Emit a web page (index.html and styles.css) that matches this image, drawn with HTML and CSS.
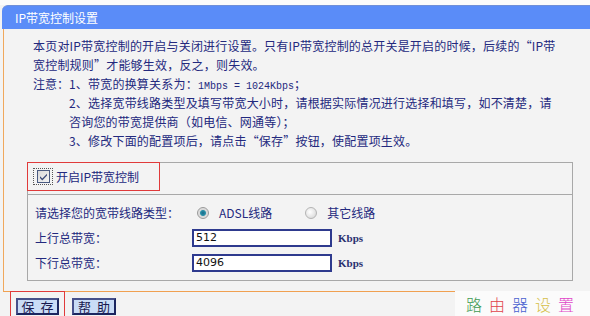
FILE: index.html
```html
<!DOCTYPE html>
<html lang="zh-CN">
<head>
<meta charset="utf-8">
<title>IP带宽控制设置</title>
<link rel="stylesheet" href="styles.css">
</head>
<body>
<div class="page">
  <div class="titlebar">IP带宽控制设置</div>
  <div class="panel">
    <div class="intro">
      <p class="line">本页对IP带宽控制的开启与关闭进行设置。只有IP带宽控制的总开关是开启的时候，后续的“IP带</p>
      <p class="line">宽控制规则”才能够生效，反之，则失效。</p>
      <div class="note">
        <span class="note-label">注意：</span>
        <div class="note-items">
          <p class="line">1、带宽的换算关系为：<span class="mono">1Mbps = 1024Kbps</span>；</p>
          <p class="line">2、选择宽带线路类型及填写带宽大小时，请根据实际情况进行选择和填写，如不清楚，请</p>
          <p class="line">咨询您的带宽提供商（如电信、网通等）；</p>
          <p class="line">3、修改下面的配置项后，请点击“保存”按钮，使配置项生效。</p>
        </div>
      </div>
    </div>
    <div class="group">
      <div class="group-head">
        <label class="hl-box">
          <span class="focus">
            <svg class="checkbox" width="13" height="13" viewBox="0 0 13 13">
              <defs>
                <linearGradient id="cbg" x1="0" y1="0" x2="1" y2="1">
                  <stop offset="0" stop-color="#d8d8d8"/>
                  <stop offset="1" stop-color="#f4f4f4"/>
                </linearGradient>
              </defs>
              <rect x="0.5" y="0.5" width="12" height="12" fill="url(#cbg)" stroke="#4a5a80"/>
              <path d="M3 6.2 L5.3 8.6 L10 3.8 L10 5.6 L5.3 10.4 L3 8 Z" fill="#3a4a78"/>
            </svg>
          </span>
          <span class="head-text">开启IP带宽控制</span>
        </label>
      </div>
      <div class="group-body">
        <div class="row">
          <span class="label">请选择您的宽带线路类型：</span>
          <div class="value radios">
            <span class="radio-item">
              <span class="radio checked"></span><span class="radio-text">ADSL线路</span>
            </span>
            <span class="radio-item">
              <span class="radio"></span><span class="radio-text">其它线路</span>
            </span>
          </div>
        </div>
        <div class="row">
          <span class="label">上行总带宽：</span>
          <div class="value">
            <span class="input">512</span><span class="unit">Kbps</span>
          </div>
        </div>
        <div class="row">
          <span class="label">下行总带宽：</span>
          <div class="value">
            <span class="input">4096</span><span class="unit">Kbps</span>
          </div>
        </div>
      </div>
    </div>
  </div>
  <div class="actions">
    <span class="hl-btn"><button class="btn" type="button">保 存</button></span>
    <button class="btn btn-plain" type="button">帮 助</button>
  </div>
  <div class="watermark">
    <span class="wm c1">路</span><span class="wm c2">由</span><span class="wm c3">器</span><span class="wm c4">设</span><span class="wm c5">置</span>
  </div>
</div>
</body>
</html>
```

FILE: styles.css
```css
* { box-sizing: border-box; }

html, body {
  margin: 0;
  padding: 0;
}

body {
  background: #f3f3f3;
  font-family: "Noto Sans CJK SC", "DejaVu Sans", sans-serif;
  font-size: 12px;
  color: #23297e;
  width: 590px;
  height: 316px;
  overflow: hidden;
}

.page {
  position: relative;
  width: 590px;
  height: 316px;
  padding-top: 5px;
  background: linear-gradient(#fbfbfb 0, #fbfbfb 5px, #f3f3f3 5px);
}

.titlebar {
  margin-left: 2px;
  height: 24px;
  line-height: 23px;
  padding-left: 13px;
  background: #5a8cf8;
  border-top: 1px solid #6f8fd8;
  border-radius: 6px 0 0 0;
  color: #ffffff;
  font-size: 12px;
}

.panel {
  margin-left: 3px;
  border-left: 1px solid #f0a85c;
  border-bottom: 1px solid #f0a050;
  padding: 7px 17px 10px 0;
  background: #f3f3f3;
}

.intro {
  padding-left: 29px;
}

.line {
  margin: 0;
  height: 19px;
  line-height: 19px;
  white-space: nowrap;
  letter-spacing: 0.2px;
}

.note {
  display: flex;
}

.note-label {
  width: 36px;
  flex: none;
  line-height: 19px;
}

.note-items {
  display: flex;
  flex-direction: column;
}

.mono {
  font-family: "Liberation Mono", monospace;
  font-size: 10px;
  letter-spacing: 0;
}

.group {
  margin: 12px 0 0 23px;
  border: 1px solid #a8a8a8;
}

.group-head {
  height: 32px;
  border-bottom: 1px solid #a8a8a8;
}

.hl-box {
  display: inline-flex;
  align-items: center;
  margin: -1px 0 0 -1px;
  width: 133px;
  height: 29px;
  border: 1px solid #e03a3a;
  padding-left: 5px;
}

.focus {
  display: inline-flex;
  align-items: center;
  justify-content: center;
  width: 20px;
  height: 17px;
  outline: 1px dotted #555;
  outline-offset: -1px;
}

.checkbox {
  display: block;
}

.head-text {
  margin-left: 3px;
  font-size: 12px;
}

.group-body {
  padding: 5px 0 5px 7px;
}

.row {
  display: grid;
  grid-template-columns: 157px 1fr;
  align-items: center;
  height: 25px;
}

.label {
  font-size: 12px;
}

.value {
  display: flex;
  align-items: center;
}

.radios {
  padding-left: 5px;
}

.radio-item {
  display: inline-flex;
  align-items: center;
  margin-right: 33px;
}

.radio {
  width: 12px;
  height: 12px;
  border-radius: 50%;
  border: 1px solid #b4b4b4;
  background: radial-gradient(circle at 40% 40%, #ffffff 0, #e4e4e4 60%, #cfcfcf 100%);
  flex: none;
}

.radio.checked {
  background: radial-gradient(circle at 50% 50%, #1a6a8a 0, #2a90a8 2.5px, #d8d8d8 3.5px, #e8e8e8 100%);
  border-color: #9a9a9a;
}

.radio-text {
  margin-left: 10px;
  font-size: 12px;
}

.input {
  display: inline-block;
  width: 140px;
  height: 18px;
  line-height: 14px;
  border: 2px solid #2e3a8e;
  background: #ffffff;
  padding-left: 2px;
  color: #111;
  font-family: "DejaVu Sans", sans-serif;
  font-size: 11px;
}

.unit {
  margin-left: 6px;
  font-family: "Liberation Serif", serif;
  font-weight: bold;
  font-size: 11px;
  color: #2a3070;
}

.actions {
  display: flex;
  align-items: flex-start;
  padding: 0 0 0 10px;
  margin-top: -1px;
  gap: 7px;
}

.hl-btn {
  display: inline-block;
  border: 1px solid #e03a3a;
  padding: 6px 5px 4px 5px;
  height: 28px;
}

.btn {
  display: inline-flex;
  align-items: center;
  justify-content: center;
  width: 43px;
  height: 17px;
  padding: 0;
  margin: 0;
  border: 2px solid #1b2660;
  border-top-color: #46508a;
  border-left-color: #46508a;
  background: #c9dcf6;
  color: #1a1a50;
  font-family: "Noto Sans CJK SC", sans-serif;
  font-size: 13px;
  line-height: 13px;
  white-space: pre;
  word-spacing: 3px;
}

.btn-plain {
  margin-top: 7px;
  width: 44px;
}

.watermark {
  position: absolute;
  right: 0;
  bottom: 0;
  width: 135px;
  height: 25px;
  background: #fbfbfb;
  display: flex;
  align-items: center;
  padding-left: 11px;
  gap: 7px;
}

.wm {
  font-weight: 300;
  font-size: 16px;
  line-height: 20px;
}

.c1 { color: #3f9a52; }
.c2 { color: #e0434a; }
.c3 { color: #4a62d0; }
.c4 { color: #d6c04a; }
.c5 { color: #e046c8; }
```
